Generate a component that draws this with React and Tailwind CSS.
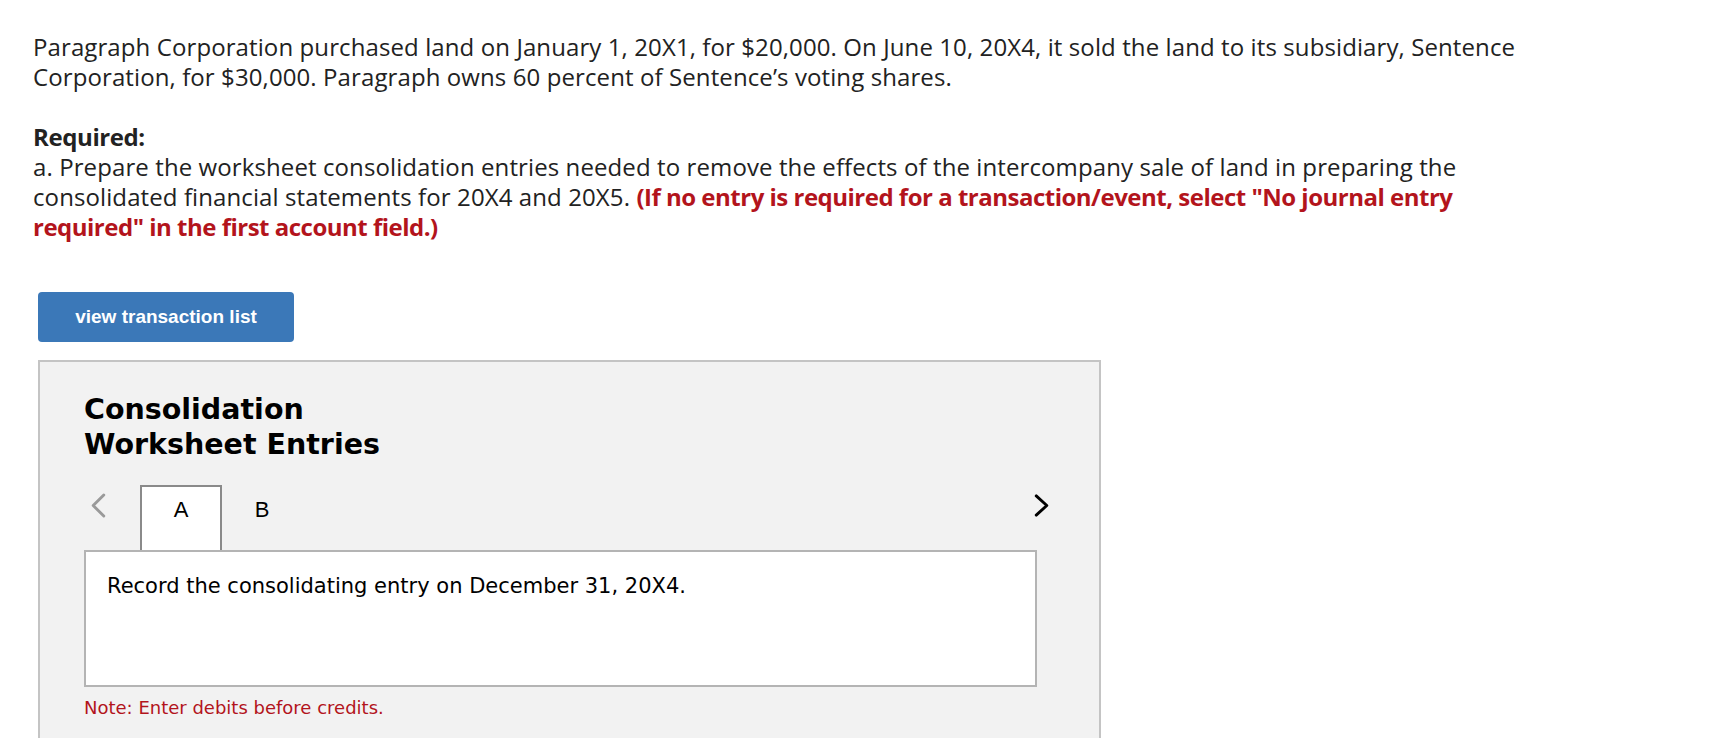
import React from 'react';

const ChevronLeft = ({ className }) => (
  <svg viewBox="0 0 18 26" className={className} fill="none" stroke="currentColor" strokeWidth="3" strokeLinecap="round" strokeLinejoin="round">
    <path d="M15 2 L4 13 L15 24" />
  </svg>
);

const ChevronRight = ({ className }) => (
  <svg viewBox="0 0 18 26" className={className} fill="none" stroke="currentColor" strokeWidth="3" strokeLinecap="round" strokeLinejoin="round">
    <path d="M3 3 L14 13 L3 23" />
  </svg>
);

const App = () => {
  return (
    <div className="min-h-screen bg-white pl-[33px] pt-[32px] text-[#222] [font-family:'Open_Sans','Lato',sans-serif]">
      {/* Question text */}
      <p className="whitespace-nowrap text-[24px] leading-[30px] tracking-[0.1px]">
        Paragraph Corporation purchased land on January 1, 20X1, for $20,000. On June 10, 20X4, it sold the land to its subsidiary, Sentence
        <br />
        Corporation, for $30,000. Paragraph owns 60 percent of Sentence’s voting shares.
      </p>

      <div className="mt-[30px] whitespace-nowrap text-[24px] leading-[30px] tracking-[0.1px]">
        <p className="font-bold tracking-[-0.4px]">Required:</p>
        <p>
          a. Prepare the worksheet consolidation entries needed to remove the effects of the intercompany sale of land in preparing the
          <br />
          consolidated financial statements for 20X4 and 20X5.{' '}
          <span className="font-bold tracking-[-0.5px] text-[#b3141c]">(If no entry is required for a transaction/event, select "No journal entry</span>
          <br />
          <span className="font-bold tracking-[-0.5px] text-[#b3141c]">required" in the first account field.)</span>
        </p>
      </div>

      {/* Button */}
      <button className="mt-[50px] ml-[5px] flex h-[50px] w-[256px] items-center justify-center rounded-[4px] bg-[#3b78b8] text-[19px] font-bold text-white [font-family:'Liberation_Sans',Arial,sans-serif]">
        view transaction list
      </button>

      {/* Worksheet panel */}
      <div className="mt-[18px] ml-[5px] w-[1063px] border-2 border-b-0 border-[#c4c4c4] bg-[#f2f2f2] pl-[44px] pr-[48px] pt-[30px] pb-[40px] [font-family:'DejaVu_Sans',Verdana,sans-serif]">
        <h2 className="text-[28.5px] font-bold leading-[35px] text-black">
          Consolidation
          <br />
          Worksheet Entries
        </h2>

        <div className="mt-[23px] flex items-end">
          <div className="mb-[32px] flex w-[56px] justify-start pl-[5px]">
            <ChevronLeft className="h-[25px] w-[18px] text-[#9a9a9a]" />
          </div>
          <div className="flex h-[65px] w-[82px] items-start justify-center border-2 border-b-0 border-[#8a8a8a] bg-white pt-[6px] text-[22px] text-black [font-family:'Liberation_Sans',Arial,sans-serif]">
            A
          </div>
          <div className="flex h-[65px] w-[80px] items-start justify-center pt-[8px] text-[22px] text-black [font-family:'Liberation_Sans',Arial,sans-serif]">
            B
          </div>
          <div className="flex-1" />
          <div className="mb-[32px]">
            <ChevronRight className="h-[25px] w-[18px] text-black" />
          </div>
        </div>

        <div className="h-[137px] w-[953px] border-2 border-[#b4b4b4] bg-white px-[21px] pt-[19px] text-[21px] text-black">
          Record the consolidating entry on December 31, 20X4.
        </div>

        <p className="mt-[7px] text-[18px] text-[#b3141c]">Note: Enter debits before credits.</p>
      </div>
    </div>
  );
};

export default App;
